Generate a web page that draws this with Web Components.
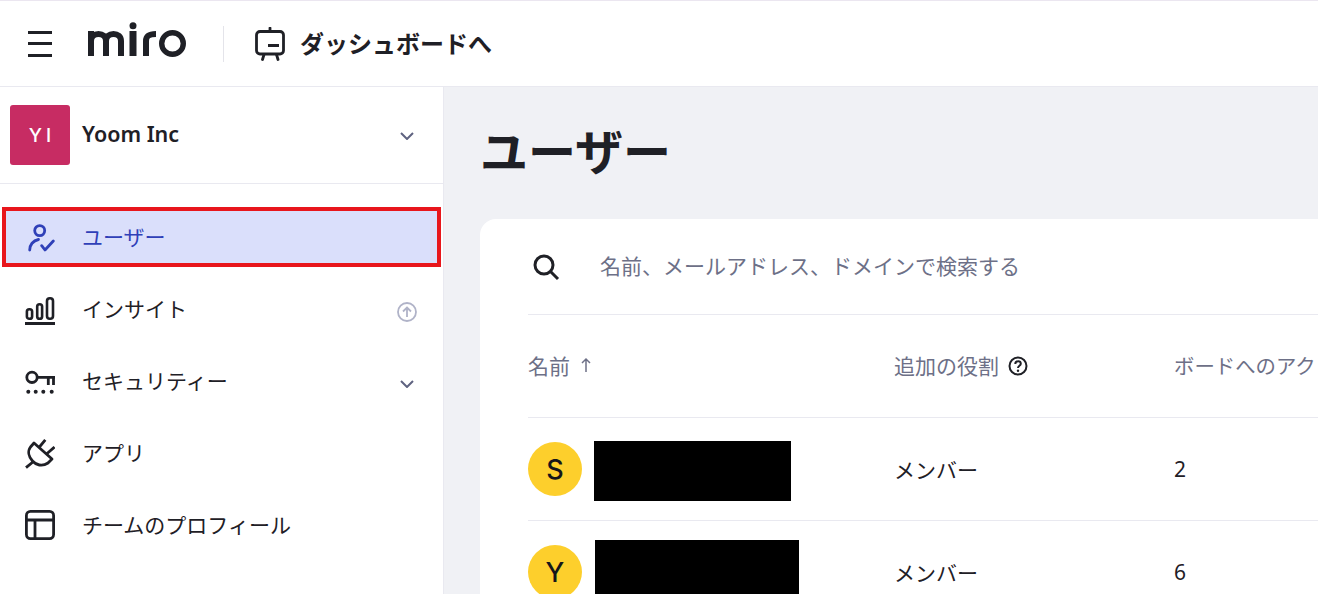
<!DOCTYPE html>
<html lang="ja">
<head>
<meta charset="utf-8">
<title>ユーザー</title>
<style>
html,body{margin:0;overflow:hidden;background:#fff;}
body{font-family:"Noto Sans","Noto Sans CJK JP",sans-serif;color:#1f2026;display:flex;flex-direction:column;height:594px;}
</style>
</head>
<body>
<template id="t-header">
<style>
:host{display:flex;align-items:center;height:85px;border-top:1px solid #ebe6f0;border-bottom:1px solid #e9e9f0;padding-left:28px;flex:none;background:#fff;}
.burger{width:24px;height:26px;display:flex;flex-direction:column;justify-content:space-between;}
.burger i{display:block;height:3px;background:#1f2026;}
.logo{margin:0 0 9px 36px;width:98px;height:36px;display:block;}
.sep{width:1px;height:36px;background:#e4e4ea;margin-left:37px;}
.back{margin-left:31px;width:32px;height:34px;display:block;}
.label{margin-left:13px;font-size:24px;font-weight:700;line-height:1;}
</style>
<div class="burger"><i></i><i></i><i></i></div>
<svg class="logo" viewBox="0 0 98 36" role="img" aria-label="miro" fill="none" stroke="#1f2026" stroke-width="6">
<path d="M3 35V10M3 20c0-4.500 3.200-7 7.500-7s7.500 2.500 7.500 7V35M18 20c0-4.500 3.200-7 7.500-7s7.500 2.500 7.500 7V35"/>
<path d="M45 10V35" stroke-width="7"/>
<circle cx="45" cy="4.700" r="3.500" fill="#1f2026" stroke="none"/>
<path d="M58 35V20c0-5 3-7 10-7"/>
<circle cx="84.500" cy="22.500" r="10.800" stroke-width="5.400"/>
</svg>
<div class="sep"></div>
<svg class="back" viewBox="0 0 32 34" fill="none" stroke="#1f2026" stroke-width="2.800" stroke-linecap="round" stroke-linejoin="round">
<path d="M15 1v3"/>
<rect x="1.500" y="4.500" width="27" height="22.500" rx="3.500"/>
<path d="M13 18.500h11" stroke-linecap="butt" stroke-width="3"/>
<path d="M9 27.500l-1.500 5M21.500 27.500l1.500 5"/>
</svg>
<div class="label"><slot></slot></div>
</template>

<template id="t-org">
<style>
:host{display:flex;align-items:center;height:96px;border-bottom:1px solid #e9e9f0;padding-left:10px;flex:none;}
.av{width:60px;height:60px;border-radius:3px;background:#c72c63;color:#fff;display:flex;align-items:center;justify-content:center;font-family:Inter,"Noto Sans",sans-serif;font-size:19px;font-weight:500;letter-spacing:4px;padding-left:4px;box-sizing:border-box;}
.name{margin:0 0 3px 12px;font-size:21.500px;font-weight:600;flex:1;}
.chev{width:14px;height:8px;margin:2px 29px 0 0;}
</style>
<div class="av"><slot name="initials"></slot></div>
<div class="name"><slot></slot></div>
<svg class="chev" viewBox="0 0 14 8" fill="none" stroke="#5f6380" stroke-width="2"><path d="M1 1l6 6 6-6"/></svg>
</template>

<template id="t-nav">
<style>
:host{display:grid;grid-template-columns:32px 1fr 24px;column-gap:26px;align-items:center;height:60px;box-sizing:border-box;margin:0 2px 12px;border:4px solid transparent;padding:0 18px;font-size:21px;}
:host([active]){background:#dadffb;border-color:#e8161c;color:#2f40b8;}
.ic,.tr{display:flex;align-items:center;justify-content:center;}
.tr{padding-top:5px;margin-right:1px;}
.tx{padding-bottom:2px;}
::slotted(svg){display:block;}
</style>
<div class="ic"><slot name="icon"></slot></div>
<div class="tx"><slot></slot></div>
<div class="tr"><slot name="trail"></slot></div>
</template>

<template id="t-side">
<style>
:host{display:flex;flex-direction:column;width:443px;flex:none;border-right:1px solid #e9e9f0;background:#fff;}
nav{padding-top:23px;}
</style>
<slot name="org"></slot>
<nav><slot></slot></nav>
</template>

<template id="t-table">
<style>
:host{display:block;background:#fff;border-radius:16px 0 0 0;margin:0 -1px 0 0;padding:0 0 0 48px;font-size:21px;}
.search{display:flex;align-items:center;height:95px;border-bottom:1px solid #e9e9f0;color:#6d7087;}
.search svg{width:28px;height:28px;margin-left:4px;flex:none;}
.search span{margin:0 0 3px 40px;}
.hd{display:grid;grid-template-columns:366px 280px 1fr;align-items:center;height:102px;border-bottom:1px solid #e9e9f0;color:#6d7087;white-space:nowrap;}
.hd div{display:flex;align-items:center;padding-bottom:2px;}
.hd .last{font-size:20.400px;}
.q{width:20px;height:20px;margin:2px 0 0 9px;}
.arrow{width:12px;height:16px;margin-left:10px;}
</style>
<div class="search">
<svg viewBox="0 0 28 28" fill="none" stroke="#1f2026" stroke-width="3"><circle cx="12" cy="12" r="9"/><path d="M18.500 18.500L26 26"/></svg>
<span>名前、メールアドレス、ドメインで検索する</span>
</div>
<div class="hd">
<div>名前<svg class="arrow" viewBox="0 0 12 16" fill="none" stroke="#6d7087" stroke-width="1.500"><path d="M6 15V2M2 6l4-4 4 4"/></svg></div>
<div>追加の役割<svg class="q" viewBox="0 0 20 20" fill="none" stroke="#1f2026" stroke-width="2"><circle cx="10" cy="10" r="8.500"/><path d="M7.300 8c0-1.700 1.200-2.700 2.800-2.700s2.700 1 2.700 2.400c0 2.200-2.800 2-2.800 4.300"/><circle cx="10" cy="14.800" r="1.200" fill="#1f2026" stroke="none"/></svg></div>
<div class="last">ボードへのアク</div>
</div>
<slot></slot>
</template>

<template id="t-row">
<style>
:host{display:grid;grid-template-columns:366px 280px 1fr;align-items:center;height:102px;border-bottom:1px solid #e9e9f0;flex:none;}
.u{display:flex;align-items:center;}
.a{width:54px;height:54px;border-radius:50%;background:#fdcf2c;color:#15161a;display:flex;align-items:center;justify-content:center;font-size:27px;font-weight:500;font-family:Inter,sans-serif;flex:none;}
.r{background:#000;height:var(--h,60px);margin:var(--mt,4px) 0 var(--mb,0) var(--gap,12px);width:var(--w,197px);}
.t{padding-bottom:1px;}
</style>
<div class="u"><div class="a"><slot name="initial"></slot></div><div class="r"></div></div>
<div class="t"><slot name="role"></slot></div>
<div class="t"><slot name="count"></slot></div>
</template>

<app-header>ダッシュボードへ</app-header>
<div style="display:flex;flex:1;min-height:0">
<side-bar>
<org-switcher slot="org"><span slot="initials">YI</span>Yoom Inc</org-switcher>
<nav-item active>
<svg slot="icon" width="30" height="30" viewBox="0 0 30 30" fill="none" stroke="#2f40b8" stroke-width="2.800" stroke-linecap="round" stroke-linejoin="round"><circle cx="14.700" cy="8.600" r="5"/><path d="M4.700 28C4.700 23 8 18.500 13.500 17.500"/><path d="M16.700 23.700L20 28L28.300 19"/></svg>
ユーザー</nav-item>
<nav-item>
<svg slot="icon" width="30" height="32" viewBox="0 0 30 32" fill="none" stroke="#1f2026" stroke-width="2.600"><rect x="1.900" y="16.200" width="5.200" height="9.600" rx="2.400"/><rect x="12.200" y="11.200" width="4.900" height="14.600" rx="2.400"/><rect x="22" y="5.200" width="6" height="20.600" rx="2.800"/><path d="M0 30.500h30" stroke-width="3"/></svg>
インサイト
<svg slot="trail" width="20" height="20" viewBox="0 0 20 20" fill="none" stroke="#b0b3c8" stroke-width="1.800"><circle cx="10" cy="10" r="9"/><path d="M10 15V6M6 9.500L10 5.500l4 4"/></svg></nav-item>
<nav-item>
<svg slot="icon" width="30" height="32" viewBox="0 0 30 32" fill="none" stroke="#1f2026" stroke-width="2.800"><circle cx="7" cy="12.300" r="5.200"/><path d="M12.500 12.300H30M23.300 12.300V20M28.500 12.300V20"/><g fill="#1f2026" stroke="none"><circle cx="3.300" cy="26.700" r="2"/><circle cx="10.700" cy="26.700" r="2"/><circle cx="18.300" cy="26.700" r="2"/><circle cx="26.700" cy="26.700" r="2"/></g></svg>
セキュリティー
<svg slot="trail" width="14" height="8" viewBox="0 0 14 8" fill="none" stroke="#5f6380" stroke-width="2"><path d="M1 1l6 6 6-6"/></svg></nav-item>
<nav-item>
<svg slot="icon" width="30" height="32" viewBox="0 0 30 32" fill="none" stroke="#1f2026" stroke-width="2.800" stroke-linejoin="round"><path d="M9 6L27 22L23 26C17 30 11 28 7.500 24C3.500 19.500 2.500 14 5.500 10Z"/><path d="M14 10.500L20.300 2.800M21.500 17L29.500 10M1 30.700L8.500 24.500"/></svg>
アプリ</nav-item>
<nav-item>
<svg slot="icon" width="30" height="30" viewBox="0 0 30 30" fill="none" stroke="#1f2026" stroke-width="2.800"><rect x="1.400" y="1.400" width="27.200" height="27.200" rx="4"/><path d="M1.400 10h27.200M10 10v18.600"/></svg>
チームのプロフィール</nav-item>
</side-bar>
<main-area>ユーザー
<user-table slot="card">
<user-row><span slot="initial">S</span><span slot="role">メンバー</span><span slot="count">2</span></user-row>
<user-row style="--gap:13px;--w:204px;--h:55px;--mt:0px;--mb:9px"><span slot="initial">Y</span><span slot="role">メンバー</span><span slot="count">6</span></user-row>
</user-table>
</main-area>
</div>
<script>
const def=(name,tpl)=>customElements.define(name,class extends HTMLElement{
  constructor(){super();this.attachShadow({mode:"open"}).appendChild(document.getElementById(tpl).content.cloneNode(true));}
});
def("app-header","t-header");
def("org-switcher","t-org");
def("nav-item","t-nav");
def("side-bar","t-side");
def("user-table","t-table");
def("user-row","t-row");
customElements.define("main-area",class extends HTMLElement{
  constructor(){super();this.attachShadow({mode:"open"}).innerHTML=`<style>
  :host{display:block;flex:1;min-width:0;background:#f0f1f5;overflow:hidden;padding-left:36px;}
  h1{margin:0;height:132px;display:flex;align-items:center;padding-bottom:2px;box-sizing:border-box;font-size:48px;font-weight:700;line-height:1;color:#1f2026;}
  </style><h1><slot></slot></h1><slot name="card"></slot>`;}
});
</script>
</body>
</html>
